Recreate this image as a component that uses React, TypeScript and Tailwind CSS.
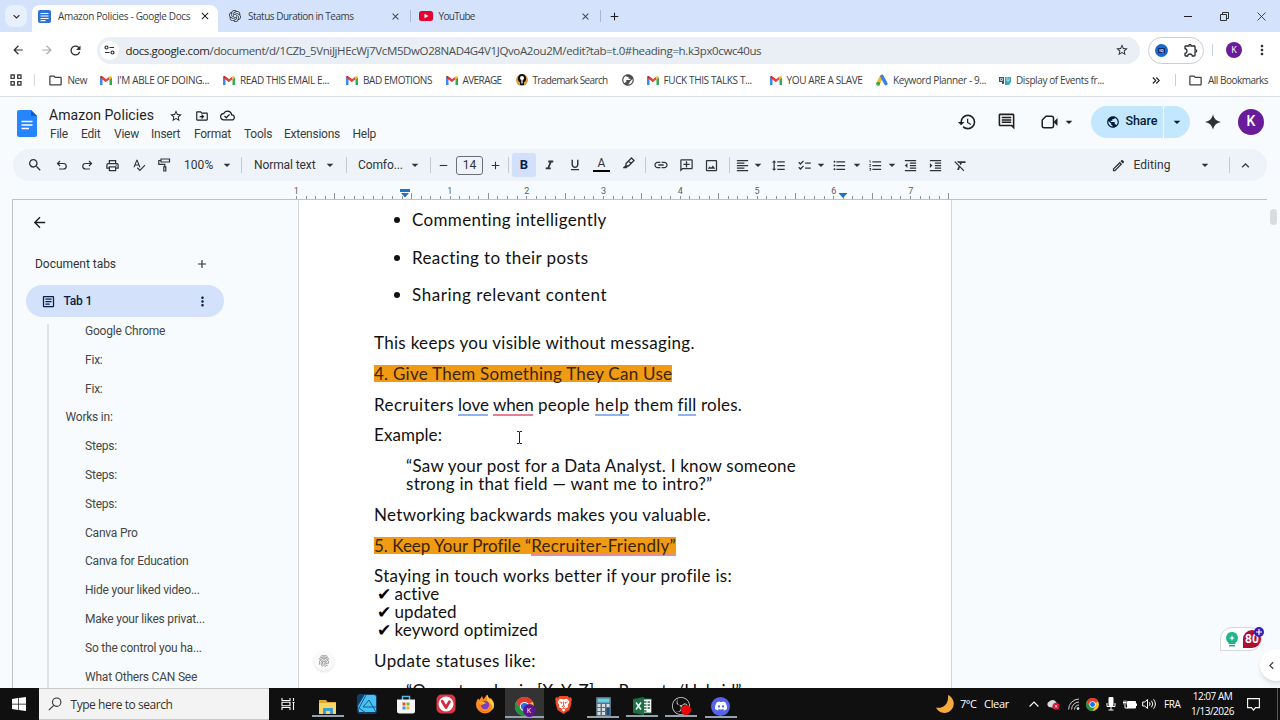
import React from 'react';
import {
    MdAdd, MdArrowBack, MdArrowDropDown, MdArrowForward, MdChecklist, MdClose, MdFingerprint,
    MdFormatAlignLeft, MdFormatClear, MdFormatIndentDecrease, MdFormatIndentIncrease, MdFormatItalic,
    MdFormatLineSpacing, MdFormatListBulleted, MdFormatListNumbered, MdFormatUnderlined, MdHistory, MdKeyboardArrowDown,
    MdKeyboardArrowLeft, MdKeyboardArrowUp, MdLink, MdMoreVert, MdOutlineAddComment, MdOutlineArticle,
    MdOutlineCloudDone, MdOutlineDriveFileMove, MdOutlineEdit, MdOutlineExtension, MdOutlineFolder, MdOutlineImage,
    MdOutlineInsertComment, MdOutlinePrint, MdPublic, MdRefresh, MdRemove, MdSearch, MdSpellcheck,
    MdStarBorder,
} from 'react-icons/md';
import { SiDiscord, SiObsstudio, SiOpenai } from 'react-icons/si';

interface Bookmark {
    label: string;
    icon: React.ReactNode;
    width: string;
    tracking: string;
}

interface OutlineItem {
    label: string;
    top?: boolean;
}

const GmailIcon = () => (
    <svg viewBox="0 0 24 18" className="w-3 h-[9px] shrink-0">
        <path d="M0 18V3l5 3.6V18z" fill="#4285f4" />
        <path d="M19 18V6.600L24 3v15z" fill="#34a853" />
        <path d="M0 3C0 .6 2.600-.7 4.500.8L12 6.500V12L0 3z" fill="#c5221f" />
        <path d="M5 1.200 12 6.500l7-5.300v5.400L12 12 5 6.600z" fill="#ea4335" />
        <path d="M19 1.200C21.500-.7 24 .6 24 3l-5 3.600z" fill="#fbbc04" />
    </svg>
);

const DocsIcon = ({ className }: { className: string }) => (
    <svg viewBox="0 0 20 27" className={className}>
        <path d="M2 0h12l6 6v19a2 2 0 0 1-2 2H2a2 2 0 0 1-2-2V2a2 2 0 0 1 2-2z" fill="#2684fc" />
        <path d="M14 0l6 6h-6z" fill="#0d5fd0" />
        <path d="M4.500 11.500h11M4.500 15h11M4.500 18.500h7.500" stroke="#fff" strokeWidth="1.300" />
    </svg>
);

const DocsFavicon = () => (
    <svg viewBox="0 0 13 13" className="w-[13px] h-[13px] shrink-0">
        <rect width="13" height="13" rx="2" fill="#2a72d8" />
        <path d="M2.500 3.500h8M2.500 6h8M2.500 8.500h8M2.500 10.600h5" stroke="#fff" strokeWidth="1.200" />
    </svg>
);

const ChromeIcon = ({ className }: { className: string }) => (
    <svg viewBox="0 0 24 24" className={className}>
        <circle cx="12" cy="12" r="12" fill="#fbc116" />
        <path d="M12 12 1.600 6A12 12 0 0 1 22.400 6z" fill="#e33b2e" />
        <path d="M12 6h10.400A12 12 0 0 0 1.600 6L6.800 15z" fill="#e33b2e" />
        <path d="M1.600 6A12 12 0 0 0 12 24l5.200-9L12 12 6.800 15z" fill="#229342" />
        <circle cx="12" cy="12" r="5.800" fill="#fff" />
        <circle cx="12" cy="12" r="4.500" fill="#1a73e8" />
    </svg>
);

const UndoIcon = ({ className = '' }: { className?: string }) => (
    <svg viewBox="0 0 14 14" className={'w-[14px] h-[14px] ' + className} fill="none" stroke="currentColor" strokeWidth="1.200">
        <path d="M5 3 2.500 5.500 5 8M2.500 5.500h6a2.750 2.750 0 0 1 0 5.500H4" />
    </svg>
);

const PaintRollerIcon = () => (
    <svg viewBox="0 0 14 14" className="w-[14px] h-[14px]" fill="none" stroke="currentColor" strokeWidth="1.200">
        <path d="M4 1h8.500v3H4zM4 2.500H1.800V6.300h6v2.500M6.800 8.900h2V13h-2z" />
    </svg>
);

const Sep = ({ className = '' }: { className?: string }) => (
    <div className={'w-px h-4 bg-[#c7cbd1] shrink-0 ' + className} />
);

const Cell = ({ className, children }: { className: string; children: React.ReactNode }) => (
    <div className={'flex items-center justify-center shrink-0 ' + className}>{children}</div>
);

const Caret = () => <MdArrowDropDown size={16} className="shrink-0" />;

const bookmarks: Bookmark[] = [
    { label: "I'M ABLE OF DOING...", icon: <GmailIcon />, width: 'w-[123px]', tracking: 'tracking-[-0.34px]' },
    { label: 'READ THIS EMAIL E...', icon: <GmailIcon />, width: 'w-[123px]', tracking: 'tracking-[-0.38px]' },
    { label: 'BAD EMOTIONS', icon: <GmailIcon />, width: 'w-[99.5px]', tracking: 'tracking-[-0.42px]' },
    { label: 'AVERAGE', icon: <GmailIcon />, width: 'w-[70px]', tracking: 'tracking-[-0.59px]' },
    {
        label: 'Trademark Search',
        icon: (
            <svg viewBox="0 0 12 12" className="w-3 h-3 shrink-0">
                <circle cx="6" cy="6" r="6" fill="#d99a4a" />
                <path d="M6 0a4.500 4.500 0 0 1 2 8.300V11H4V8.300A4.500 4.500 0 0 1 6 0z" fill="#111" />
                <circle cx="6" cy="4" r="2" fill="#fff" />
                <path d="M5.400 5h1.200v4.500H5.400z" fill="#fff" />
            </svg>
        ),
        width: 'w-[105px]',
        tracking: 'tracking-[-0.64px]',
    },
    { label: '', icon: <MdPublic size={14} className="text-[#4a4d51] shrink-0 -scale-x-100" />, width: 'w-[26px]', tracking: '' },
    { label: 'FUCK THIS TALKS T...', icon: <GmailIcon />, width: 'w-[123px]', tracking: 'tracking-[-0.38px]' },
    { label: 'YOU ARE A SLAVE', icon: <GmailIcon />, width: 'w-[106.5px]', tracking: 'tracking-[-0.36px]' },
    {
        label: 'Keyword Planner - 9...',
        icon: (
            <svg viewBox="0 0 12 12" className="w-3 h-3 shrink-0" strokeLinecap="round" strokeWidth="3.600">
                <path d="M5.500 2.500 2.200 9.500" stroke="#fbbc04" />
                <path d="M6 2.500 9.800 9.500" stroke="#3f7fe8" />
                <circle cx="2.200" cy="9.700" r="2" fill="#34a853" />
            </svg>
        ),
        width: 'w-[123px]',
        tracking: 'tracking-[-0.38px]',
    },
    {
        label: 'Display of Events fr...',
        icon: (
            <svg viewBox="0 0 12 9" className="w-3 h-[9px] shrink-0">
                <path d="M0 1h5v7H3V6H0z" fill="#3e5660" />
                <path d="M6 1h6v5l-2 3H6z" fill="#35a8b0" />
                <path d="M1.500 2.500h2v2h-2zM8 1v4h2V2" fill="none" stroke="#d7eef0" strokeWidth=".8" />
            </svg>
        ),
        width: 'w-[125px]',
        tracking: 'tracking-[-0.39px]',
    },
];

const outline: OutlineItem[] = [
    { label: 'Google Chrome' },
    { label: 'Fix:' },
    { label: 'Fix:' },
    { label: 'Works in:', top: true },
    { label: 'Steps:' },
    { label: 'Steps:' },
    { label: 'Steps:' },
    { label: 'Canva Pro' },
    { label: 'Canva for Education' },
    { label: 'Hide your liked video...' },
    { label: 'Make your likes privat...' },
    { label: 'So the control you ha...' },
    { label: 'What Others CAN See' },
];

const TabStrip = () => (
    <div className="h-8 bg-[#d4e3fb] flex items-end text-[10px] text-[#3c4043] font-['Open_Sans',sans-serif]">
        <div className="ml-[5px] mb-[5px] w-[22px] h-[22px] rounded-lg bg-[#e8f0fd] flex items-center justify-center text-[#1f1f1f]">
            <MdKeyboardArrowDown size={13} />
        </div>
        <div className="ml-[5px] w-[186px] h-[27px] bg-white rounded-t-[8px] flex items-center pb-[5px] text-[#3c4043]">
            <div className="ml-[6px]"><DocsFavicon /></div>
            <span className="ml-[7px] w-[141px] whitespace-nowrap tracking-[-0.34px]">Amazon Policies - Google Docs</span>
            <MdClose size={12} className="text-[#1f1f1f]" />
        </div>
        <div className="h-[27px] flex items-center pb-[5px]">
            <SiOpenai size={12} className="ml-[11px] text-[#2b2f36]" />
            <span className="ml-[7px] w-[141.500px] whitespace-nowrap tracking-[-0.5px]">Status Duration in Teams</span>
            <MdClose size={11} />
            <div className="ml-[9px] w-px h-3 bg-[#a5b8d8]" />
            <svg viewBox="0 0 14 10" className="ml-[8px] w-[14px] h-[10px]">
                <rect width="14" height="10" rx="2.500" fill="#e6002d" />
                <path d="M5.500 2.800v4.400L9.500 5z" fill="#fff" />
            </svg>
            <span className="ml-[6px] w-[141px] tracking-[-0.7px]">YouTube</span>
            <MdClose size={11} />
            <div className="ml-[9px] w-px h-3 bg-[#a5b8d8]" />
            <MdAdd size={13} className="ml-[7px] text-[#1f1f1f]" />
        </div>
        <div className="ml-auto h-8 flex items-center text-[#1f1f1f]">
            <Cell className="w-[36px]"><div className="w-2 h-px bg-[#1f1f1f]" /></Cell>
            <Cell className="w-[37px]">
                <svg viewBox="0 0 9 9" className="w-[9px] h-[9px]" fill="none" stroke="#1f1f1f" strokeWidth=".9">
                    <path d="M.5 2.500h6v6h-6zM2.500 2.500v-2h6v6h-2" />
                </svg>
            </Cell>
            <Cell className="w-[37px]">
                <svg viewBox="0 0 9 9" className="w-[9px] h-[9px]" stroke="#1f1f1f" strokeWidth=".8">
                    <path d="M.5.5l8 8M8.500.5l-8 8" />
                </svg>
            </Cell>
        </div>
    </div>
);

const AddressBar = () => (
    <div className="h-9 bg-white flex items-center text-[#2a2d31] font-['Open_Sans',sans-serif]">
        <Cell className="ml-[3px] w-[29px]"><MdArrowBack size={14} /></Cell>
        <Cell className="w-[29px] text-[#a9acb0]"><MdArrowForward size={14} /></Cell>
        <Cell className="w-[29px]"><MdRefresh size={15} /></Cell>
        <div className="ml-[7px] w-[1043px] h-[27px] rounded-full bg-[#e9eff5] flex items-center">
            <div className="ml-[3px] w-[19px] h-[19px] rounded-full bg-white flex items-center justify-center">
                <svg viewBox="0 0 11 10" className="w-[11px] h-[10px]" fill="none" stroke="#2a2d31" strokeWidth="1.200">
                    <circle cx="2.500" cy="2.500" r="1.500" />
                    <circle cx="8.500" cy="7.500" r="1.500" />
                    <path d="M5.500 2.500H10M1 7.500h4.500" />
                </svg>
            </div>
            <span className="ml-[6.500px] w-[989px] pt-px whitespace-nowrap text-[11.500px] tracking-[-0.38px] text-[#4a4e54]">
                <span className="text-[#1f1f1f]">docs.google.com</span>/document/d/1CZb_5VniJjHEcWj7VcM5DwO28NAD4G4V1JQvoA2ou2M/edit?tab=t.0#heading=h.k3px0cwc40us
            </span>
            <MdStarBorder size={14} className="shrink-0" />
        </div>
        <div className="ml-[8px] w-[56px] h-[27px] rounded-full border border-[#c8ccd1] flex items-center">
            <div className="ml-[6px] w-[13px] h-[13px] rounded-full bg-[#1967d2] flex items-center justify-center">
                <div className="w-[7px] h-[5px] rounded-[1px] bg-[#12275e] text-white text-[4px] leading-[5px] font-bold text-center">IQ</div>
            </div>
            <MdOutlineExtension size={16} className="ml-[15px]" />
        </div>
        <div className="ml-[8px] w-px h-3 bg-[#c3d0e4]" />
        <div className="ml-[13px] w-4 h-4 rounded-full bg-[#6a1b9a] text-white text-[9px] flex items-center justify-center">K</div>
        <Cell className="ml-[12px] w-4"><MdMoreVert size={16} /></Cell>
    </div>
);

const BookmarksBar = () => (
    <div className="h-[29px] bg-white border-b border-[#dadde1] flex items-center pb-[4px] text-[10px] text-[#3c4043] whitespace-nowrap font-['Open_Sans',sans-serif]">
        <svg viewBox="0 0 12 12" className="ml-[10px] w-3 h-3" fill="none" stroke="#3c4043" strokeWidth="1.300">
            <path d="M1 1h3.300v3.300H1zM7.700 1H11v3.300H7.700zM1 7.700h3.300V11H1zM7.700 7.700H11V11H7.700z" />
        </svg>
        <div className="ml-[12px] w-px h-3 bg-[#d5dae2]" />
        <MdOutlineFolder size={15} className="ml-[12.500px]" />
        <span className="ml-[5px] w-[32.500px] tracking-[-0.5px]">New</span>
        {bookmarks.map((b, i) => (
            <div key={i} className={'flex items-center shrink-0 gap-[5px] ' + b.width}>
                {b.icon}
                <span className={b.tracking}>{b.label}</span>
            </div>
        ))}
        <Cell className="ml-[22px] w-5">
            <svg viewBox="0 0 8 7" className="w-2 h-[7px]" fill="none" stroke="#1f1f1f" strokeWidth="1.100">
                <path d="M.8.500l3 3-3 3M4.300.500l3 3-3 3" />
            </svg>
        </Cell>
        <div className="ml-[9px] w-px h-3 bg-[#c3d0e4]" />
        <MdOutlineFolder size={15} className="ml-[12px]" />
        <span className="ml-[5px] tracking-[-0.51px]">All Bookmarks</span>
    </div>
);

const DocHeader = () => (
    <div className="h-[49px] flex text-[#1f1f1f]">
        <DocsIcon className="ml-[17px] mt-[13px] w-5 h-[27px]" />
        <div className="ml-[12px] pt-[9px] w-[908px]">
            <div className="flex items-center h-[19px]">
                <span className="w-[120px] text-[14px] tracking-[0.070px]">Amazon Policies</span>
                <MdStarBorder size={14} />
                <MdOutlineDriveFileMove size={14} className="ml-[11.500px]" />
                <MdOutlineCloudDone size={15} className="ml-[11px]" />
            </div>
            <div className="flex items-center h-[18px] text-[12px] tracking-[-0.25px] text-[#3a3d40]">
                <span className="ml-px w-[31px]">File</span>
                <span className="w-[33px]">Edit</span>
                <span className="w-[37px]">View</span>
                <span className="w-[43px]">Insert</span>
                <span className="w-[50px]">Format</span>
                <span className="w-[40px]">Tools</span>
                <span className="w-[68.500px]">Extensions</span>
                <span>Help</span>
            </div>
        </div>
        <div className="flex items-center">
            <Cell className="w-5"><MdHistory size={20} /></Cell>
            <Cell className="ml-[19px] w-5"><MdOutlineInsertComment size={19} /></Cell>
            <Cell className="ml-[24px] w-5">
                <svg viewBox="0 0 18 14" className="w-[18px] h-[14px]">
                    <path d="M5 1.200h5.500a2 2 0 0 1 2 2v7.600a2 2 0 0 1-2 2H3.200a2 2 0 0 1-2-2V5z" fill="none" stroke="#1f1f1f" strokeWidth="1.500" />
                    <path d="M12.500 7 16.500 3v8z" fill="#1f1f1f" />
                </svg>
            </Cell>
            <Cell className="ml-px w-4"><Caret /></Cell>
            <div className="ml-[14px] h-8 rounded-full bg-[#c2e7ff] flex items-center overflow-hidden text-[#001d35]">
                <MdPublic size={14} className="ml-[14.500px]" />
                <span className="ml-[6px] w-[37.500px] text-[12.500px] font-medium tracking-[-0.1px]">Share</span>
                <div className="w-px h-8 bg-white" />
                <Cell className="w-[26px]"><Caret /></Cell>
            </div>
            <svg viewBox="0 0 16 16" className="ml-[15px] w-4 h-4">
                <path d="M8 0c.8 4.600 3.400 7.200 8 8-4.600.8-7.200 3.400-8 8-.8-4.600-3.400-7.200-8-8 4.600-.8 7.200-3.400 8-8z" fill="#303134" />
            </svg>
            <div className="ml-[17px] w-[26px] h-[26px] rounded-full bg-[#6a1b9a] text-white text-[14px] font-medium flex items-center justify-center">K</div>
        </div>
    </div>
);

const FormatBar = () => (
    <div className="mx-[13px] mt-[3px] h-8 rounded-full bg-[#eef3f9] flex items-center pl-[8px] text-[12px] text-[#303336] whitespace-nowrap">
        <Cell className="w-7"><MdSearch size={16} /></Cell>
        <Cell className="w-[25.600px]"><UndoIcon /></Cell>
        <Cell className="w-[25.600px]"><UndoIcon className="-scale-x-100" /></Cell>
        <Cell className="w-[25.600px]"><MdOutlinePrint size={15} /></Cell>
        <Cell className="w-[25.600px]"><MdSpellcheck size={14} /></Cell>
        <Cell className="w-[25.600px]"><PaintRollerIcon /></Cell>
        <span className="ml-[7px] w-9 tracking-[0.080px] shrink-0">100%</span>
        <Cell className="w-[14px]"><Caret /></Cell>
        <Sep className="ml-[7px]" />
        <span className="ml-3 w-[69px] tracking-[-0.1px] shrink-0">Normal text</span>
        <Cell className="w-[14px]"><Caret /></Cell>
        <Sep className="ml-[9px]" />
        <span className="ml-[11px] w-[50px] tracking-[-0.1px] shrink-0">Comfo...</span>
        <Cell className="w-[14px]"><Caret /></Cell>
        <Sep className="ml-2" />
        <Cell className="w-[25px]"><MdRemove size={13} /></Cell>
        <Cell className="w-[27px] h-[19px] border border-[#6c7074] rounded-[3px]">14</Cell>
        <Cell className="w-[25px]"><MdAdd size={13} /></Cell>
        <Sep />
        <Cell className="ml-[3px] w-6 h-6 rounded-[3px] bg-[#d3e0fb] font-bold text-[13px] text-[#041e49]">B</Cell>
        <Cell className="w-[27px]"><MdFormatItalic size={15} /></Cell>
        <Cell className="w-[25px]"><MdFormatUnderlined size={14} /></Cell>
        <Cell className="w-[27px] flex-col">
            <span className="text-[12px] leading-[11px]">A</span>
            <div className="mt-px w-[17px] h-[2.500px] bg-black" />
        </Cell>
        <Cell className="w-[28px]">
            <svg viewBox="0 0 12 12" className="mb-1 w-3 h-3" fill="none" stroke="currentColor" strokeWidth="1.300">
                <path d="M3 6.500 8.500 1l2.500 2.500L5.500 9H3zM5.500 4l2.500 2.500M3 8.500 1 10.500h2.500l1-1.500" />
            </svg>
        </Cell>
        <Sep className="ml-[2px]" />
        <Cell className="w-[30px]"><MdLink size={16} /></Cell>
        <Cell className="w-[22px]"><MdOutlineAddComment size={15} className="-scale-x-100" /></Cell>
        <Cell className="w-[28px]"><MdOutlineImage size={15} /></Cell>
        <Sep className="ml-[3px]" />
        <Cell className="w-[25px]"><MdFormatAlignLeft size={15} /></Cell>
        <Cell className="w-[6px]"><Caret /></Cell>
        <Cell className="w-[35px]"><MdFormatLineSpacing size={15} /></Cell>
        <Cell className="w-[17px]"><MdChecklist size={15} /></Cell>
        <Cell className="w-[17px]"><Caret /></Cell>
        <Cell className="w-[20px]"><MdFormatListBulleted size={15} /></Cell>
        <Cell className="w-[14px]"><Caret /></Cell>
        <Cell className="w-[23px]"><MdFormatListNumbered size={15} /></Cell>
        <Cell className="w-[11px]"><Caret /></Cell>
        <Cell className="w-[25px]"><MdFormatIndentDecrease size={15} /></Cell>
        <Cell className="w-[26px]"><MdFormatIndentIncrease size={15} /></Cell>
        <Cell className="w-6"><MdFormatClear size={15} /></Cell>
        <Cell className="ml-[133px] w-[26px]"><MdOutlineEdit size={15} /></Cell>
        <span className="ml-[1.500px] w-[64.500px] tracking-[0.060px]">Editing</span>
        <Cell className="w-[14px]"><Caret /></Cell>
        <Sep className="ml-[17px]" />
        <Cell className="w-[31px]"><MdKeyboardArrowUp size={15} /></Cell>
    </div>
);

const Ruler = () => (
    <div className="mt-[4px] h-[14px] w-[1267px] grid text-[#5a5e62]">
        <div className="col-start-1 row-start-1 ml-[257.900px] flex text-[9px] leading-[13px]">
            {['1', '', '1', '2', '3', '4', '5', '6', '7'].map((n, i) => (
                <div key={i} className="w-[76.800px] shrink-0 text-center">{n}</div>
            ))}
        </div>
        <div className="col-start-1 row-start-1 ml-[296px] flex items-end h-[14px]">
            {Array.from({ length: 69 }, (_, i) => (
                <div
                    key={i}
                    className={
                        'w-[9.600px] shrink-0 border-l border-[#8e9296] ' +
                        (i % 8 === 4 || i === 68 ? 'h-[6px]' : 'h-[3px]')
                    }
                />
            ))}
        </div>
        {/* Indent markers */}
        <div className="col-start-1 row-start-1 ml-[400px] flex">
            <svg viewBox="0 0 10 9" className="mt-[4px] w-[10px] h-[9px]">
                <path d="M0 0h10v3H0zM1 4h8L5 8.500z" fill="#1a73c8" />
            </svg>
            <svg viewBox="0 0 10 5" className="ml-[428px] mt-[8px] w-[10px] h-[5px]">
                <path d="M.5 0h9L5 5z" fill="#1a73c8" />
            </svg>
        </div>
    </div>
);

const Sidebar = () => (
    <div className="w-[285px] shrink-0 text-[12px] text-[#444746]">
        <MdArrowBack size={17} className="ml-[18px] mt-[14px] text-[#1f1f1f]" />
        <div className="mt-[23px] ml-[22px] h-5 flex items-center text-[#303336]">
            <span className="w-[160px] tracking-[-0.030px]">Document tabs</span>
            <MdAdd size={14} />
        </div>
        <div className="mt-[11px] ml-[13px] w-[198px] h-8 rounded-full bg-[#d3e1fb] flex items-center text-[#041e49]">
            <MdOutlineArticle size={15} className="ml-[14.500px]" />
            <span className="ml-[8px] w-[131.500px] font-medium tracking-[-0.2px]">Tab 1</span>
            <MdMoreVert size={15} />
        </div>
        <div className="ml-[34px] mt-[7px] h-[400px] border-l-2 border-[#dfe3e5]">
            {outline.map((item, i) => (
                <div
                    key={i}
                    className={
                        'h-[28.800px] tracking-[-0.210px] leading-[15px] whitespace-nowrap ' +
                        (item.top ? 'pl-[16.500px]' : 'pl-[36px]')
                    }
                >
                    {item.label}
                </div>
            ))}
        </div>
    </div>
);

const Page = () => (
    <div className="w-[654px] shrink-0 bg-white border-l border-r border-[#d3d6d9] text-[17px] leading-[18px] text-[#111] whitespace-nowrap font-['Lato',sans-serif]">
        <div className="pl-[75px] pt-[11px]">
            <div className="flex items-center h-[18px] mb-[20px]">
                <div className="ml-[20px] mr-[12px] w-[6px] h-[6px] rounded-full bg-[#111]" />
                <span className="tracking-[0.340px]">Commenting intelligently</span>
            </div>
            <div className="flex items-center h-[18px] mb-[19px]">
                <div className="ml-[20px] mr-[12px] w-[6px] h-[6px] rounded-full bg-[#111]" />
                <span className="tracking-[0.400px]">Reacting to their posts</span>
            </div>
            <div className="flex items-center h-[18px] mb-[30px]">
                <div className="ml-[20px] mr-[12px] w-[6px] h-[6px] rounded-full bg-[#111]" />
                <span className="tracking-[0.550px]">Sharing relevant content</span>
            </div>
            <p className="mb-[13px] tracking-[0.300px]">This keeps you visible without messaging.</p>
            <p className="mb-[14px] flex">
                <span className="h-[17px] bg-[#f19a13] tracking-[0.260px] text-[#3a2503]">4. Give Them Something They Can Use</span>
            </p>
            <p className="mb-[12px] flex gap-[5px] tracking-[0.200px]">
                <span className="w-[79px] tracking-[0.450px]">Recruiters</span>
                <span className="w-[30px] h-[20px] border-b-2 border-[#8fb3ee] tracking-[0px]">love</span>
                <span className="w-[40px] h-[20px] border-b-2 border-[#e57f98] tracking-[-0.200px]">when</span>
                <span className="w-[52px]">people</span>
                <span className="w-[34px] h-[20px] border-b-2 border-[#8fb3ee] tracking-[0.600px]">help</span>
                <span className="w-[38.500px]">them</span>
                <span className="w-[18.500px] h-[20px] border-b-2 border-[#8fb3ee]">fill</span>
                <span>roles.</span>
            </p>
            <p className="-mt-[2px] mb-[13px] tracking-[0.060px]">Example:</p>
            <p className="ml-[32px] tracking-[0.220px]">“Saw your post for a Data Analyst. I know someone</p>
            <p className="ml-[32px] mb-[13px] tracking-[0.270px]">strong in that field — want me to intro?”</p>
            <p className="mb-[13px] tracking-[0.330px]">Networking backwards makes you valuable.</p>
            <p className="mb-[11px] flex text-[#3a2503]">
                <span className="h-[17px] bg-[#f19a13] whitespace-pre tracking-[0.010px]">5. Keep Your Profile “</span>
                <span className="h-[19px] bg-[#f19a13] border-b-2 border-[#e88a9c] tracking-[0.230px]">Recruiter-Friendly”</span>
            </p>
            <p className="tracking-[0.330px]">Staying in touch works better if your profile is:</p>
            {['active', 'updated', 'keyword optimized'].map(word => (
                <p key={word} className="flex">
                    <span className="ml-[3px] w-[17.500px] text-[17px] text-black font-['DejaVu_Sans',sans-serif]">✔</span>
                    <span className="tracking-[0.110px]">{word}</span>
                </p>
            ))}
            <p className="mt-[13px] tracking-[0.385px]">Update statuses like:</p>
            <p className="mt-[12px] ml-[32px] tracking-[0.050px]">“Open to roles in [X, Y, Z] or Remote/Hybrid”</p>
        </div>
    </div>
);

const Taskbar = () => (
    <div className="h-8 bg-[#101010] flex shrink-0 text-[10.500px] text-white font-['Open_Sans',sans-serif]">
        <Cell className="w-[38.500px]">
            <svg viewBox="0 0 14 14" className="w-[14px] h-[14px]" fill="#fff">
                <path d="M0 2l6-.9v5.600H0zM6.700 1 14 0v6.700H6.700zM0 7.400h6V13l-6-.9zM6.700 7.400H14V14l-7.300-1z" />
            </svg>
        </Cell>
        <div className="w-[230px] bg-[#f3f3f3] border-y border-[#c9c9c9] flex items-center text-[#333]">
            <svg viewBox="0 0 14 14" className="ml-[9px] w-[14px] h-[14px]" fill="none" stroke="#333" strokeWidth="1.100">
                <circle cx="8.700" cy="5.200" r="4.200" />
                <path d="M5.700 8.300.8 13.200" />
            </svg>
            <span className="ml-[9px] pt-px text-[12px] tracking-[-0.450px]">Type here to search</span>
        </div>
        <Cell className="w-[39px]">
            <svg viewBox="0 0 14 12" className="w-[14px] h-3" fill="none" stroke="#fff" strokeWidth="1.100">
                <path d="M1 0v2.500h8V0M1 12V9.500h8V12M1 4.200h8v3.600H1zM12.500 0v3M12.500 5v7M11.500 4.500h2" />
            </svg>
        </Cell>
        <Cell className="w-[40px] flex-col justify-between pt-[7px]">
            <svg viewBox="0 0 18 16" className="w-[18px] h-4">
                <path d="M0 1h7l1.500 2H17v12H0z" fill="#e0a92e" />
                <path d="M0 4h17v11H0z" fill="#f9d766" />
                <path d="M4 15V9h10v6h-3v-3H7v3z" fill="#3e9bd0" />
            </svg>
            <div className="w-8 h-[2px] bg-[#93a3b0]" />
        </Cell>
        <Cell className="w-[39px]">
            <svg viewBox="0 0 20 20" className="w-5 h-5">
                <rect width="20" height="20" rx="3" fill="#123b66" />
                <path d="M7.500 1H17a2 2 0 0 1 2 2v15H2L1 12z" fill="#47c2f4" />
                <path d="M9 1 2 14l7 5M6 13h13M6 13l6-7 7 12" fill="none" stroke="#175a8a" strokeWidth="1" />
            </svg>
        </Cell>
        <Cell className="w-[39px]">
            <svg viewBox="0 0 18 19" className="w-[18px] h-[19px]">
                <path d="M5.500 6V1.500h7V6" fill="none" stroke="#58b8e8" strokeWidth="1.500" />
                <path d="M0 4.500h18V16a2.500 2.500 0 0 1-2.500 2.500h-13A2.500 2.500 0 0 1 0 16z" fill="#f4f4f4" />
                <path d="M5.500 7.500h3v3h-3z" fill="#e8512c" />
                <path d="M9.500 7.500h3v3h-3z" fill="#7db52c" />
                <path d="M5.500 11.500h3v3h-3z" fill="#2d9fdc" />
                <path d="M9.500 11.500h3v3h-3z" fill="#f3b21c" />
            </svg>
        </Cell>
        <Cell className="w-[40px]">
            <svg viewBox="0 0 20 20" className="w-5 h-5">
                <rect x=".5" y=".5" width="19" height="19" rx="5" fill="#dc3545" />
                <circle cx="10" cy="10" r="7.500" fill="#fff" />
                <path d="M6.200 7.200l3.800 6.300 3.400-5.700" fill="none" stroke="#d42c3e" strokeWidth="2.800" strokeLinecap="round" strokeLinejoin="round" />
            </svg>
        </Cell>
        <Cell className="w-[39px]">
            <svg viewBox="0 0 20 20" className="w-5 h-5">
                <path d="M10 19.500A9 9 0 0 1 1 10.500C1 8 2 6 3 4.500L4.500 6 7 2l1.500 3.500L12 .5l2 4 1.500-.5c2.500 2 3.500 4.500 3.500 7a9 9 0 0 1-9 8.500z" fill="#ff8a1e" />
                <path d="M12 .5l2 4c3 1.500 5 4 5 7a9 9 0 0 1-1.500 4.500C18 10 14 8 12 7z" fill="#ffd23c" />
                <path d="M1.300 12.500c2 4.500 8 6.500 13.500 3.500A9 9 0 0 1 1.300 12.500z" fill="#f0335c" />
                <circle cx="10" cy="11" r="4.200" fill="#7b3fc4" />
                <path d="M4 8c3-1.500 5-.5 7 1.500-2 0-2.500 1-4 1.500-1.500-.5-2.500-1.500-3-3z" fill="#ffac2e" />
            </svg>
        </Cell>
        <Cell className="w-[39px] bg-[#333333] flex-col justify-between pt-[6px]">
            <div className="relative">
                <ChromeIcon className="w-[19px] h-[19px]" />
                <div className="absolute left-[8px] top-[7px] w-[13px] h-[13px] rounded-full bg-[#5f1590] text-[7px] leading-[13px] text-center">K</div>
            </div>
            <div className="w-full h-[2px] bg-[#93a3b0]" />
        </Cell>
        <Cell className="w-[40px]">
            <svg viewBox="0 0 17 19" className="w-[17px] h-[19px]">
                <path d="M4.500 1h8l1.500 1.500 2-.2 1 2.700-.8 1.500.3 1.500-2 7L8.500 19l-6-4-2-7 .3-1.500L0 5l1-2.700 2 .2z" fill="#ef4a26" />
                <path d="M5 3.800l3.500.7 3.500-.7 2.500 3-1.800 3.700.6 1.500-3.300 1.800-1.500-1.200-1.500 1.200L3.700 12l.6-1.500-1.800-3.700zM6.500 15l2-1.400 2 1.400-2 1.500z" fill="#fff" />
                <path d="M4.500 7l2.500.6-.5 1M12.500 7l-2.500.6.5 1M8.500 6.500v4l-1.300.8 1.300.8 1.300-.8-1.300-.8" fill="none" stroke="#ef4a26" strokeWidth=".9" />
            </svg>
        </Cell>
        <Cell className="w-[39px] flex-col justify-between pt-[6px]">
            <svg viewBox="0 0 15 19" className="w-[15px] h-[19px]">
                <rect width="15" height="19" rx="1" fill="#5c6f7d" />
                <path d="M1.500 1.500h12v4h-12z" fill="#63d0e6" />
                <path d="M1.500 7h3v3h-3zM6 7h3v3H6zM10.500 7h3v3h-3zM1.500 11h3v3h-3zM6 11h3v3H6zM1.500 15h3v3h-3zM6 15h3v3H6z" fill="#d5dde2" />
                <path d="M10.500 11h3v7h-3z" fill="#174c7c" />
            </svg>
            <div className="w-8 h-[2px] bg-[#93a3b0]" />
        </Cell>
        <Cell className="w-[39px] flex-col justify-between pt-[6px]">
            <svg viewBox="0 0 19 18" className="w-[19px] h-[18px]">
                <path d="M9 2h9.500v14H9z" fill="#fff" stroke="#1d7044" />
                <path d="M11 5h2.500M14.500 5H17M11 8h2.500M14.500 8H17M11 11h2.500M14.500 11H17M11 14h2.500" stroke="#1d7044" strokeWidth="1.500" />
                <path d="M0 2l11-2v18L0 16z" fill="#1d7044" />
                <path d="M3 5.500l5 7M8 5.500l-5 7" stroke="#fff" strokeWidth="1.500" />
            </svg>
            <div className="w-8 h-[2px] bg-[#93a3b0]" />
        </Cell>
        <Cell className="w-[39px] flex-col justify-between pt-[6px]">
            <div className="relative">
                <SiObsstudio size={18} className="text-[#d0d0d0]" />
                <div className="absolute left-[9px] top-[8px] w-[10px] h-[10px] rounded-full bg-[#e8060b]" />
            </div>
            <div className="w-8 h-[2px] bg-[#93a3b0]" />
        </Cell>
        <Cell className="w-[40px] flex-col justify-between pt-[6px]">
            <div className="w-[19px] h-[19px] rounded-full bg-[#5562ea] flex items-center justify-center">
                <SiDiscord size={12} />
            </div>
            <div className="w-8 h-[2px] bg-[#93a3b0]" />
        </Cell>
        <div className="ml-auto flex items-center">
            <svg viewBox="0 0 18 18" className="w-[18px] h-[18px]">
                <path d="M12 0a9.300 9.300 0 1 1-12 12.500C7 14 13 9 12 0z" fill="#f6ab3c" />
            </svg>
            <span className="ml-[6px] w-[24px] text-[11px] tracking-[-0.500px]">7°C</span>
            <span className="w-[42px] text-[11px] tracking-[-0.300px]">Clear</span>
            <Cell className="w-[16px]">
                <svg viewBox="0 0 10 6" className="w-[10px] h-[6px]" fill="none" stroke="#fff" strokeWidth="1.100">
                    <path d="M.6 5.500 5 1l4.400 4.500" />
                </svg>
            </Cell>
            <Cell className="w-[22px]">
                <svg viewBox="0 0 14 11" className="w-[14px] h-[11px]">
                    <path d="M3 8a3 3 0 0 1 .3-5.500A4 4 0 0 1 10 3l2 3-3 3z" fill="#dcdcdc" />
                    <circle cx="10" cy="7.300" r="3.500" fill="#d9143a" />
                    <path d="M8.700 6l2.600 2.600M11.300 6 8.700 8.600" stroke="#fff" strokeWidth=".8" />
                </svg>
            </Cell>
            <Cell className="w-[19px]">
                <svg viewBox="0 0 12 12" className="w-3 h-3" fill="none" stroke="#cfcfcf" strokeWidth="1">
                    <path d="M.6 11.500A10.500 10.500 0 0 1 11 1M3.600 11.500A7.500 7.500 0 0 1 11 4M6.500 11.500A4.500 4.500 0 0 1 11 7" />
                    <circle cx="10" cy="10.500" r="1" fill="#fff" />
                </svg>
            </Cell>
            <Cell className="w-[18px]"><ChromeIcon className="w-[13px] h-[13px]" /></Cell>
            <Cell className="w-[19px]">
                <svg viewBox="0 0 10 14" className="w-[10px] h-[14px]">
                    <rect x="2.500" width="5" height="9" rx="1" fill="#fff" />
                    <path d="M1 6v3.500h8V6M5 10v3M2.500 13h5" fill="none" stroke="#fff" strokeWidth="1" />
                </svg>
            </Cell>
            <Cell className="w-[19px]">
                <svg viewBox="0 0 14 9" className="w-[14px] h-[9px]">
                    <path d="M4.500 1.500h8v6.500h-8z" fill="#fff" stroke="#fff" />
                    <path d="M13 3.500h1v2.500h-1z" fill="#fff" />
                    <path d="M0 2.500h3M1 .5v4M3 .5v4M2 4.500V8h3" fill="none" stroke="#fff" strokeWidth="1" />
                </svg>
            </Cell>
            <Cell className="w-[20px]">
                <svg viewBox="0 0 14 12" className="w-[14px] h-3" fill="none" stroke="#fff" strokeWidth="1">
                    <path d="M.7 4h2L5.500 1.500v9L2.700 8h-2zM7.500 4.300a3 3 0 0 1 0 3.400M9.500 2.800a5 5 0 0 1 0 6.400M11.500 1.300a7.500 7.500 0 0 1 0 9.400" />
                </svg>
            </Cell>
            <span className="ml-[5px] w-[20px] text-[10px] tracking-[-0.400px]">FRA</span>
            <div className="w-[57px] text-center leading-[15px] tracking-[-0.500px] text-[10px]">
                <div>12:07 AM</div>
                <div>1/13/2026</div>
            </div>
            <svg viewBox="0 0 13 13" className="ml-[6px] w-[13px] h-[13px]" fill="none" stroke="#fff" strokeWidth="1.100">
                <path d="M.6.6h11.800v9H8.500l-2 2.500-2-2.500H.6z" />
            </svg>
            <div className="ml-[17px] mr-[2px] w-px h-8 bg-[#5a5a5a]" />
        </div>
    </div>
);

export default function App() {
    return (
        <div className="w-[1280px] h-[720px] overflow-hidden flex flex-col bg-[#f8fbfd] font-['Roboto',sans-serif]">
            <TabStrip />
            <AddressBar />
            <BookmarksBar />
            <DocHeader />
            <FormatBar />
            <Ruler />
            <div className="relative flex-1 min-h-0 overflow-hidden flex">
                <div className="ml-[12px] w-[1255px] flex items-start border-t border-l border-[#bfc3c7]">
                    <Sidebar />
                    <Page />
                </div>
                <div className="ml-[3px] mt-[10px] w-[7px] h-4 rounded-full bg-[#d9dcdf]" />

                {/* Floating widgets */}
                <div className="absolute left-[314px] top-[452px] w-5 h-5 rounded-full bg-[#fafafa] shadow-sm flex items-center justify-center text-[#6b6f73]">
                    <MdFingerprint size={14} />
                </div>
                <svg viewBox="0 0 7 13" className="absolute left-[516px] top-[232px] w-[7px] h-[13px]" fill="none" stroke="#222" strokeWidth="1">
                    <path d="M1 .5h2l.5.5.5-.5h2M3.500 1v11M1 12.500h2l.5-.5.5.5h2" />
                </svg>
                <div className="absolute left-[1220px] top-[428px] w-[42px] h-[24px] bg-white border border-[#d5d8dc] rounded-tl-[12px] rounded-r-[12px] flex items-center">
                    <svg viewBox="0 0 12 15" className="ml-[5px] w-3 h-[15px]">
                        <path d="M6 0a6 6 0 0 1 3.500 10.800V12h-7v-1.200A6 6 0 0 1 6 0zM3 13h6v1.500H3z" fill="#1fb58c" />
                        <path d="M6 3l.8 2.200L9 6l-2.200.8L6 9l-.8-2.200L3 6l2.200-.8z" fill="#fff" />
                    </svg>
                    <div className="relative ml-[5px] w-[18px] h-[18px] rounded-full rounded-bl-none bg-[#b00d33] text-white text-[12px] leading-[18px] font-bold text-center">
                        80
                        <svg viewBox="0 0 10 10" className="absolute -top-[3px] left-[11px] w-[10px] h-[10px]">
                            <circle cx="5" cy="5" r="5" fill="#3b1fb5" />
                            <path d="M5 2v6M2 5h6" stroke="#fff" strokeWidth="1.200" />
                        </svg>
                    </div>
                </div>
                <div className="absolute left-[1260px] top-[450px] w-[32px] h-[32px] rounded-full bg-white shadow-md flex items-center pl-[4px] text-[#3c4043]">
                    <MdKeyboardArrowLeft size={15} />
                </div>
            </div>
            <Taskbar />
        </div>
    );
}
